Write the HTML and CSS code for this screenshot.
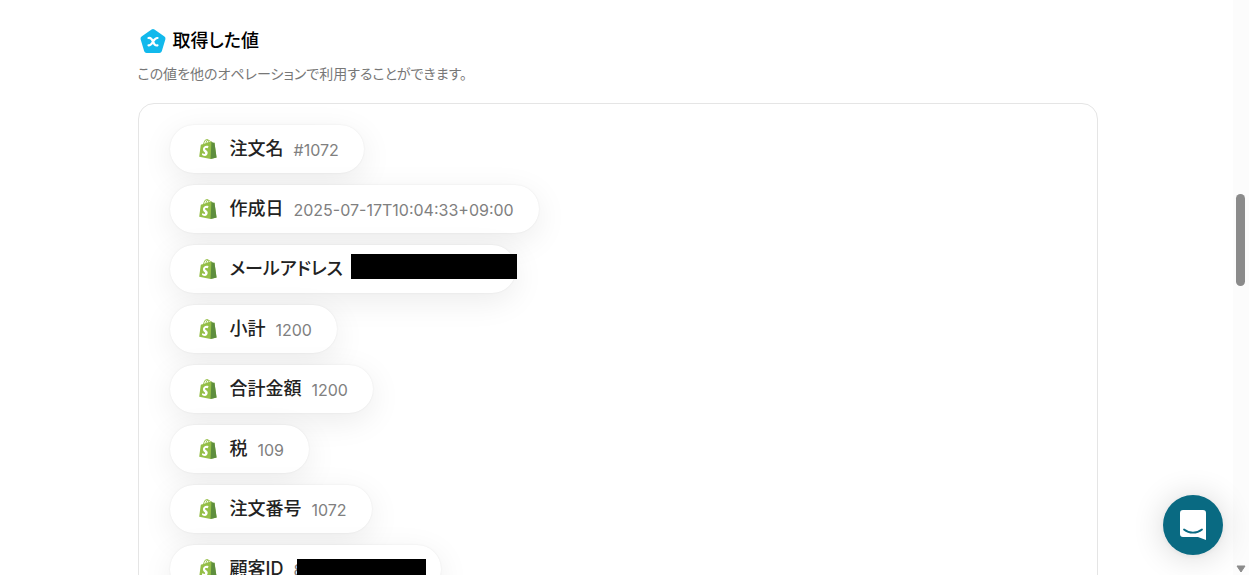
FILE: index.html
```
<!DOCTYPE html>
<html lang="ja">
<head>
    <meta charset="utf-8">
    <meta name="viewport" content="width=device-width, initial-scale=1.0">
    <title>取得した値</title>
    <link rel="stylesheet" href="styles.css">
</head>
<body>
    <!-- Shared icon -->
    <svg class="sprite" aria-hidden="true">
        <symbol id="shopify" viewBox="0 0 256 292">
            <path fill="#95BF47" d="M223.774 57.34c-.201-1.46-1.48-2.268-2.537-2.357-1.055-.088-23.383-1.743-23.383-1.743s-15.507-15.395-17.209-17.099c-1.703-1.703-5.029-1.185-6.32-.805-.19.056-3.388 1.043-8.678 2.68-5.18-14.906-14.322-28.604-30.405-28.604-.444 0-.901.018-1.358.044C129.31 3.407 123.644.779 118.75.779c-37.465 0-55.364 46.835-60.976 70.635-14.558 4.511-24.9 7.718-26.221 8.133-8.126 2.549-8.383 2.805-9.45 10.462C21.3 95.806.038 260.235.038 260.235l165.678 31.042 89.77-19.42S223.973 58.8 223.775 57.34z"/>
            <path fill="#fff" d="M156.49 40.848l-14.019 4.339c.005-.988.01-1.96.01-3.023 0-9.264-1.286-16.723-3.349-22.636 8.287 1.04 13.806 10.469 17.358 21.32zm-27.638-19.483c2.304 5.773 3.802 14.058 3.802 25.238 0 .572-.005 1.095-.01 1.624-9.117 2.824-19.024 5.89-28.953 8.966 5.575-21.516 16.025-31.908 25.161-35.828zm-11.131-10.537c1.617 0 3.246.549 4.805 1.622-12.007 5.65-24.877 19.88-30.312 48.297l-22.886 7.088C75.694 46.16 90.81 10.828 117.72 10.828z"/>
            <path fill="#5E8E3E" d="M221.237 54.983c-1.055-.088-23.383-1.743-23.383-1.743s-15.507-15.395-17.209-17.099c-.637-.634-1.496-.959-2.394-1.099l-12.527 256.233 89.762-19.418S223.972 58.8 223.774 57.34c-.201-1.46-1.48-2.268-2.537-2.357"/>
            <path fill="#fff" d="M135.242 104.585l-11.069 32.926s-9.698-5.176-21.586-5.176c-17.428 0-18.305 10.937-18.305 13.693 0 15.038 39.2 20.8 39.2 56.024 0 27.713-17.577 45.558-41.277 45.558-28.44 0-42.984-17.7-42.984-17.7l7.615-25.16s14.95 12.835 27.565 12.835c8.243 0 11.596-6.49 11.596-11.232 0-19.616-32.16-20.491-32.16-52.724 0-27.129 19.472-53.382 58.778-53.382 15.145 0 22.627 4.338 22.627 4.338"/>
        </symbol>
    </svg>

    <main class="content">
        <div class="container">
            <h2 class="title">
                <svg class="title-icon" viewBox="0 0 30 30" aria-hidden="true">
                    <path d="M15 5.500 25 12.500 21.400 24.500H8.600L5 12.500Z" fill="#12b9ec" stroke="#12b9ec" stroke-width="5" stroke-linejoin="round"/>
                    <path d="M10.500 12c2.300-.6 3.300.6 4.500 3.700 1.200 3.100 2.200 4.300 4.500 3.700M19.500 12c-2.300-.2-3.300 1.800-4.500 3.700-1.200 1.900-2.200 3.900-4.500 3.700" fill="none" stroke="#fff" stroke-width="2.200" stroke-linecap="round"/>
                </svg>
                取得した値
            </h2>
            <p class="description">この値を他のオペレーションで利用することができます。</p>

            <ul class="values">
                <li class="value-item">
                    <svg class="app-icon"><use href="#shopify"/></svg>
                    <span class="label">注文名</span>
                    <span class="value">#1072</span>
                </li>
                <li class="value-item">
                    <svg class="app-icon"><use href="#shopify"/></svg>
                    <span class="label">作成日</span>
                    <span class="value">2025-07-17T10:04:33+09:00</span>
                </li>
                <li class="value-item">
                    <svg class="app-icon"><use href="#shopify"/></svg>
                    <span class="label">メールアドレス</span>
                    <span class="value masked masked-mail"></span>
                </li>
                <li class="value-item">
                    <svg class="app-icon"><use href="#shopify"/></svg>
                    <span class="label">小計</span>
                    <span class="value">1200</span>
                </li>
                <li class="value-item">
                    <svg class="app-icon"><use href="#shopify"/></svg>
                    <span class="label">合計金額</span>
                    <span class="value">1200</span>
                </li>
                <li class="value-item">
                    <svg class="app-icon"><use href="#shopify"/></svg>
                    <span class="label">税</span>
                    <span class="value">109</span>
                </li>
                <li class="value-item">
                    <svg class="app-icon"><use href="#shopify"/></svg>
                    <span class="label">注文番号</span>
                    <span class="value">1072</span>
                </li>
                <li class="value-item">
                    <svg class="app-icon"><use href="#shopify"/></svg>
                    <span class="label">顧客ID</span>
                    <span class="value masked masked-id">8</span>
                </li>
            </ul>
        </div>
    </main>

    <div class="scrollbar" aria-hidden="true">
        <div class="scrollbar-thumb"></div>
        <svg class="scrollbar-arrow" viewBox="0 0 10 8"><path d="M1 1H9L5 7Z" fill="#8b8b8b" stroke="#8b8b8b" stroke-linejoin="round"/></svg>
    </div>

    <button class="chat-button" type="button" aria-label="チャットを開く">
        <svg viewBox="0 0 28 32" aria-hidden="true">
            <path d="M4 1H24a3 3 0 0 1 3 3V31L19 28H4a3 3 0 0 1-3-3V4a3 3 0 0 1 3-3Z" fill="#fff"/>
            <path d="M5 20.500c5.300 4.200 12.700 4.200 18 0" fill="none" stroke="#096a82" stroke-width="1.800" stroke-linecap="round"/>
        </svg>
    </button>
</body>
</html>
```
FILE: styles.css
```
* {
    box-sizing: border-box;
}
body {
    display: flex;
    height: 100vh;
    margin: 0;
    overflow: hidden;
    background: #fff;
    color: #000;
    font-family: Inter, "Noto Sans CJK JP", sans-serif;
    font-feature-settings: "palt";
}
.sprite {
    position: absolute;
    width: 0;
    height: 0;
}
.content {
    flex: 1;
    min-width: 0;
    padding: 25px 24px 0 26px;
}
.container {
    max-width: 960px;
    margin: 0 auto;
}
.title {
    display: flex;
    align-items: center;
    gap: 5px;
    margin: 0;
    font-size: 18px;
    font-weight: 500;
    line-height: 32px;
}
.title-icon {
    width: 30px;
    height: 30px;
}
.description {
    margin: 7px 0 19px;
    color: #777;
    font-size: 14px;
    line-height: 20px;
}
.values {
    display: flex;
    flex-direction: column;
    align-items: flex-start;
    gap: 12px;
    margin: 0;
    padding: 21px 31px;
    border: 1px solid #e5e5e5;
    border-radius: 16px;
    list-style: none;
}
.value-item {
    position: relative;
    display: flex;
    align-items: center;
    height: 48px;
    padding: 0 25px 0 29px;
    border-radius: 24px;
    background: #fff;
    box-shadow: 0 0 2px rgba(0, 0, 0, 0.08), 0 8px 32px rgba(0, 0, 0, 0.08);
}
.app-icon {
    width: 18px;
    height: 20px;
    margin-right: 13px;
}
.label {
    margin-right: 10px;
    color: #222;
    font-size: 18px;
    font-weight: 500;
    line-height: 24px;
}
.value {
    padding-top: 2px;
    color: #808080;
    font-size: 16px;
    line-height: 24px;
}
/* Personal data is covered with a black bar */
.masked::after {
    content: "";
    position: absolute;
    height: 25px;
    background: #000;
}
.masked-mail {
    width: 138px;
}
.masked-mail::after {
    top: 9px;
    right: -1px;
    width: 166px;
}
.masked-id {
    width: 123px;
}
.masked-id::after {
    top: 14px;
    right: 15px;
    width: 129px;
}
.scrollbar {
    display: flex;
    flex-direction: column;
    justify-content: space-between;
    align-items: center;
    width: 16px;
    padding: 194px 1px 2px 0;
    background: #fcfcfc;
}
.scrollbar-thumb {
    width: 9px;
    height: 92px;
    border-radius: 5px;
    background: #8b8b8b;
}
.scrollbar-arrow {
    width: 10px;
    height: 8px;
}
.chat-button {
    position: fixed;
    right: 26px;
    bottom: 20px;
    display: flex;
    align-items: center;
    justify-content: center;
    width: 60px;
    height: 60px;
    padding: 0;
    border: 0;
    border-radius: 50%;
    background: #096a82;
    box-shadow: 0 1px 6px rgba(0, 0, 0, 0.06), 0 2px 32px rgba(0, 0, 0, 0.16);
}
.chat-button svg {
    width: 28px;
    height: 32px;
}
```
